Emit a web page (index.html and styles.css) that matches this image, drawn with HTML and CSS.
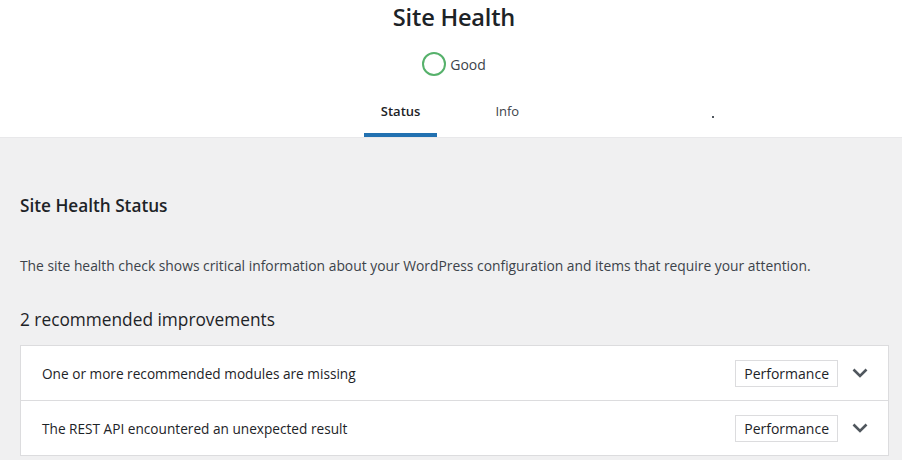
FILE: index.html
```html
<!DOCTYPE html>
<html lang="en">
<head>
<meta charset="utf-8">
<title>Site Health</title>
<link rel="stylesheet" href="styles.css">
</head>
<body>
<header class="hc-header">
  <h1 class="hc-title">Site Health</h1>
  <div class="hc-score">
    <span class="hc-ring"></span>
    <span class="hc-score-label">Good</span>
  </div>
  <nav class="hc-tabs">
    <a class="hc-tab active">Status</a>
    <a class="hc-tab">Info</a>
  </nav>
  <span class="hc-dot"></span>
</header>
<main class="hc-body">
  <h2 class="hc-h2">Site Health Status</h2>
  <p class="hc-intro">The site health check shows critical information about your WordPress configuration and items that require your attention.</p>
  <h3 class="hc-h3">2 recommended improvements</h3>
  <div class="hc-accordion">
    <div class="hc-row">
      <span class="hc-row-title">One or more recommended modules are missing</span>
      <span class="hc-badge">Performance</span>
      <svg class="hc-chev" width="16" height="10" viewBox="0 0 16 10"><path d="M1.5 1.5 L8 8 L14.5 1.5" fill="none" stroke="#50575e" stroke-width="2.6"/></svg>
    </div>
    <div class="hc-row">
      <span class="hc-row-title">The REST API encountered an unexpected result</span>
      <span class="hc-badge">Performance</span>
      <svg class="hc-chev" width="16" height="10" viewBox="0 0 16 10"><path d="M1.5 1.5 L8 8 L14.5 1.5" fill="none" stroke="#50575e" stroke-width="2.6"/></svg>
    </div>
  </div>
</main>
</body>
</html>
```

FILE: styles.css
```css
html, body {
  margin: 0;
  padding: 0;
}
body {
  background: #f0f0f1;
  font-family: "Open Sans", "Noto Sans", sans-serif;
  color: #1d2327;
  width: 902px;
  height: 460px;
  overflow: hidden;
}
.hc-header {
  position: relative;
  background: #fff;
  display: flex;
  flex-direction: column;
  align-items: center;
  border-bottom: 1px solid #e8e8ea;
}
.hc-title {
  margin: 0 0 0 6px;
  font-size: 23.6px;
  font-weight: 600;
  line-height: 34px;
  letter-spacing: -0.2px;
}
.hc-score {
  margin-top: 18px;
  display: flex;
  align-items: center;
  gap: 4px;
  height: 24px;
  padding-left: 6px;
}
.hc-ring {
  width: 20px;
  height: 20px;
  border: 2px solid #56b16b;
  border-radius: 50%;
}
.hc-score-label {
  font-size: 14px;
  color: #3c434a;
}
.hc-tabs {
  display: flex;
  gap: 41px;
  margin-top: 0;
  padding-right: 2px;
}
.hc-tab {
  display: block;
  padding: 25px 17px 12px;
  line-height: 20px;
  font-size: 13px;
  color: #3c434a;
  border-bottom: 4px solid transparent;
}
.hc-tab.active {
  font-weight: 600;
  color: #1d2327;
  border-bottom-color: #2271b1;
}
.hc-dot {
  position: absolute;
  left: 712px;
  top: 116px;
  width: 2px;
  height: 2px;
  background: #50575e;
}
.hc-body {
  padding: 0 13px 0 20px;
}
.hc-h2 {
  margin: 56px 0 0;
  font-size: 17.2px;
  font-weight: 600;
  line-height: 24px;
}
.hc-intro {
  margin: 38px 0 0;
  font-size: 13.85px;
  line-height: 20px;
  color: #3c434a;
}
.hc-h3 {
  margin: 30px 0 0;
  font-size: 17.3px;
  font-weight: 400;
  line-height: 28px;
  color: #1d2327;
}
.hc-accordion {
  margin-top: 11px;
  background: #fff;
  border: 1px solid #dcdcde;
}
.hc-row {
  display: flex;
  align-items: center;
  height: 54px;
  padding: 0 20px 0 21px;
}
.hc-row + .hc-row {
  border-top: 1px solid #dcdcde;
}
.hc-row-title {
  flex: 1;
  font-size: 13.65px;
  color: #1d2327;
}
.hc-badge {
  border: 1px solid #dcdcde;
  padding: 0 8px;
  height: 25px;
  line-height: 25px;
  font-size: 14px;
  color: #1d2327;
  margin-right: 14px;
}
.hc-chev {
  display: block;
}
```
